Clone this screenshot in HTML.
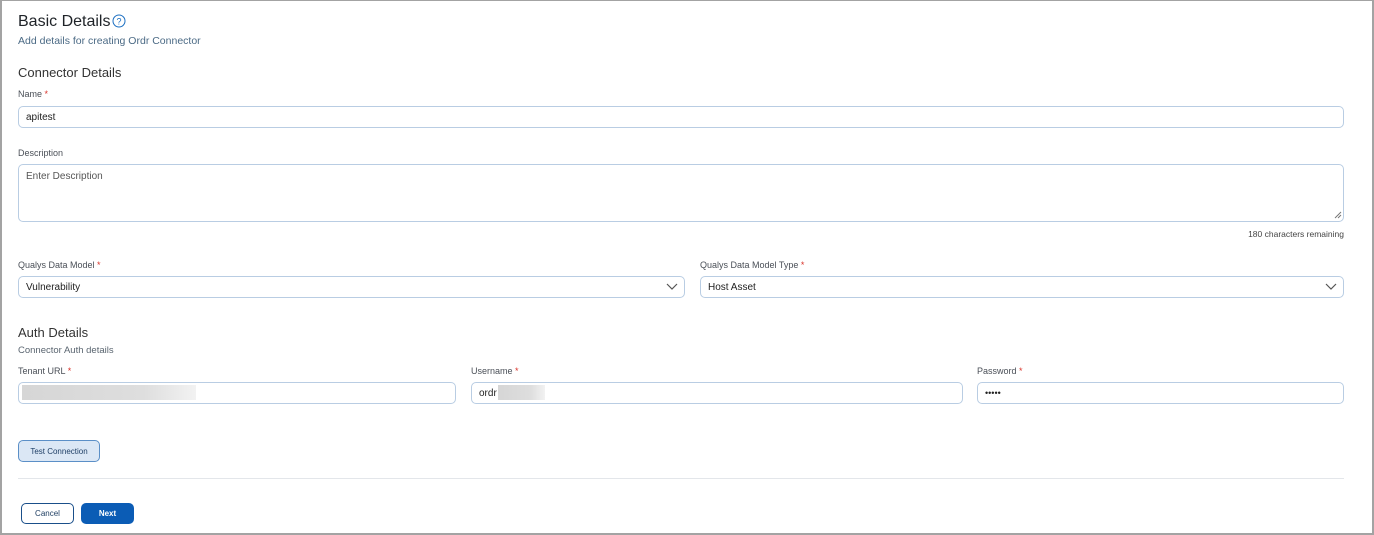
<!DOCTYPE html>
<html><head><style>
*{box-sizing:border-box;margin:0;padding:0}
body{width:1374px;height:535px;background:#fff;font-family:"Liberation Sans",sans-serif;position:relative;overflow:hidden}
.frame{position:absolute;left:0;top:0;width:1374px;height:535px;border:2px solid #a3a3a3;border-top-width:1px}
.a{position:absolute;white-space:nowrap}
.lbl{font-size:9px;color:#4a4f57}
.req{color:#d9342b}
.in{position:absolute;border:1px solid #b9cde3;border-radius:5px;background:#fff;font-size:10px;color:#222;padding-left:7px;display:flex;align-items:center}
.h2{font-size:13px;color:#333}
.chev{position:absolute;right:6px;top:5px}
.blur{position:absolute;background:linear-gradient(90deg,#d6d6d6,#dedede 70%,#f2f2f2)}
</style></head><body>
<div class="frame"></div>
<div class="a" style="left:18px;top:13px;font-size:16px;color:#1f2328">Basic Details</div>
<svg class="a" style="left:112px;top:14px" width="14" height="14" viewBox="0 0 14 14"><circle cx="7" cy="7" r="6" fill="none" stroke="#1b6fc2" stroke-width="1"/><text x="7" y="10.5" font-size="9" text-anchor="middle" fill="#1b6fc2" font-family="Liberation Sans">?</text></svg>
<div class="a" style="left:18px;top:35px;font-size:10.5px;color:#4b6a85">Add details for creating Ordr Connector</div>
<div class="a h2" style="left:18px;top:65px">Connector Details</div>
<div class="a lbl" style="left:18px;top:89px">Name <span class="req">*</span></div>
<div class="in" style="left:18px;top:106px;width:1326px;height:22px">apitest</div>
<div class="a lbl" style="left:18px;top:148px">Description</div>
<div class="in" style="left:18px;top:164px;width:1326px;height:58px;align-items:flex-start;padding-top:6px;color:#555">Enter Description</div>
<svg class="a" style="left:1334px;top:211px" width="8" height="8"><path d="M1 7L7 1M4 7L7 4" stroke="#777" stroke-width="1"/></svg>
<div class="a" style="right:30px;top:229px;font-size:8.5px;color:#444">180 characters remaining</div>
<div class="a lbl" style="left:18px;top:260px">Qualys Data Model <span class="req">*</span></div>
<div class="in" style="left:18px;top:276px;width:667px;height:22px">Vulnerability<svg class="chev" width="12" height="10"><path d="M1 2L6 7L11 2" fill="none" stroke="#555" stroke-width="1.2"/></svg></div>
<div class="a lbl" style="left:700px;top:260px">Qualys Data Model Type <span class="req">*</span></div>
<div class="in" style="left:700px;top:276px;width:644px;height:22px">Host Asset<svg class="chev" width="12" height="10"><path d="M1 2L6 7L11 2" fill="none" stroke="#555" stroke-width="1.2"/></svg></div>
<div class="a h2" style="left:18px;top:325px">Auth Details</div>
<div class="a" style="left:18px;top:345px;font-size:9.5px;color:#5a6570">Connector Auth details</div>
<div class="a lbl" style="left:18px;top:366px">Tenant URL <span class="req">*</span></div>
<div class="in" style="left:18px;top:382px;width:438px;height:22px"></div>
<div class="blur" style="left:22px;top:385px;width:174px;height:15px"></div>
<div class="a lbl" style="left:471px;top:366px">Username <span class="req">*</span></div>
<div class="in" style="left:471px;top:382px;width:492px;height:22px">ordr</div>
<div class="blur" style="left:498px;top:385px;width:47px;height:15px"></div>
<div class="a lbl" style="left:977px;top:366px">Password <span class="req">*</span></div>
<div class="in" style="left:977px;top:382px;width:367px;height:22px;font-size:9px">•••••</div>
<div class="a" style="left:18px;top:440px;width:82px;height:22px;border:1px solid #5b8fc7;border-radius:5px;background:#dbe7f5;font-size:8px;color:#1f3f66;display:flex;align-items:center;justify-content:center">Test Connection</div>
<div class="a" style="left:18px;top:478px;width:1326px;height:1px;background:#e3e6ea"></div>
<div class="a" style="left:21px;top:503px;width:53px;height:21px;border:1px solid #1a4f8a;border-radius:5px;background:#fff;font-size:8px;color:#1a3a5f;display:flex;align-items:center;justify-content:center">Cancel</div>
<div class="a" style="left:81px;top:503px;width:53px;height:21px;border-radius:5px;background:#0b5cb5;font-size:8px;color:#fff;font-weight:bold;display:flex;align-items:center;justify-content:center">Next</div>
</body></html>
